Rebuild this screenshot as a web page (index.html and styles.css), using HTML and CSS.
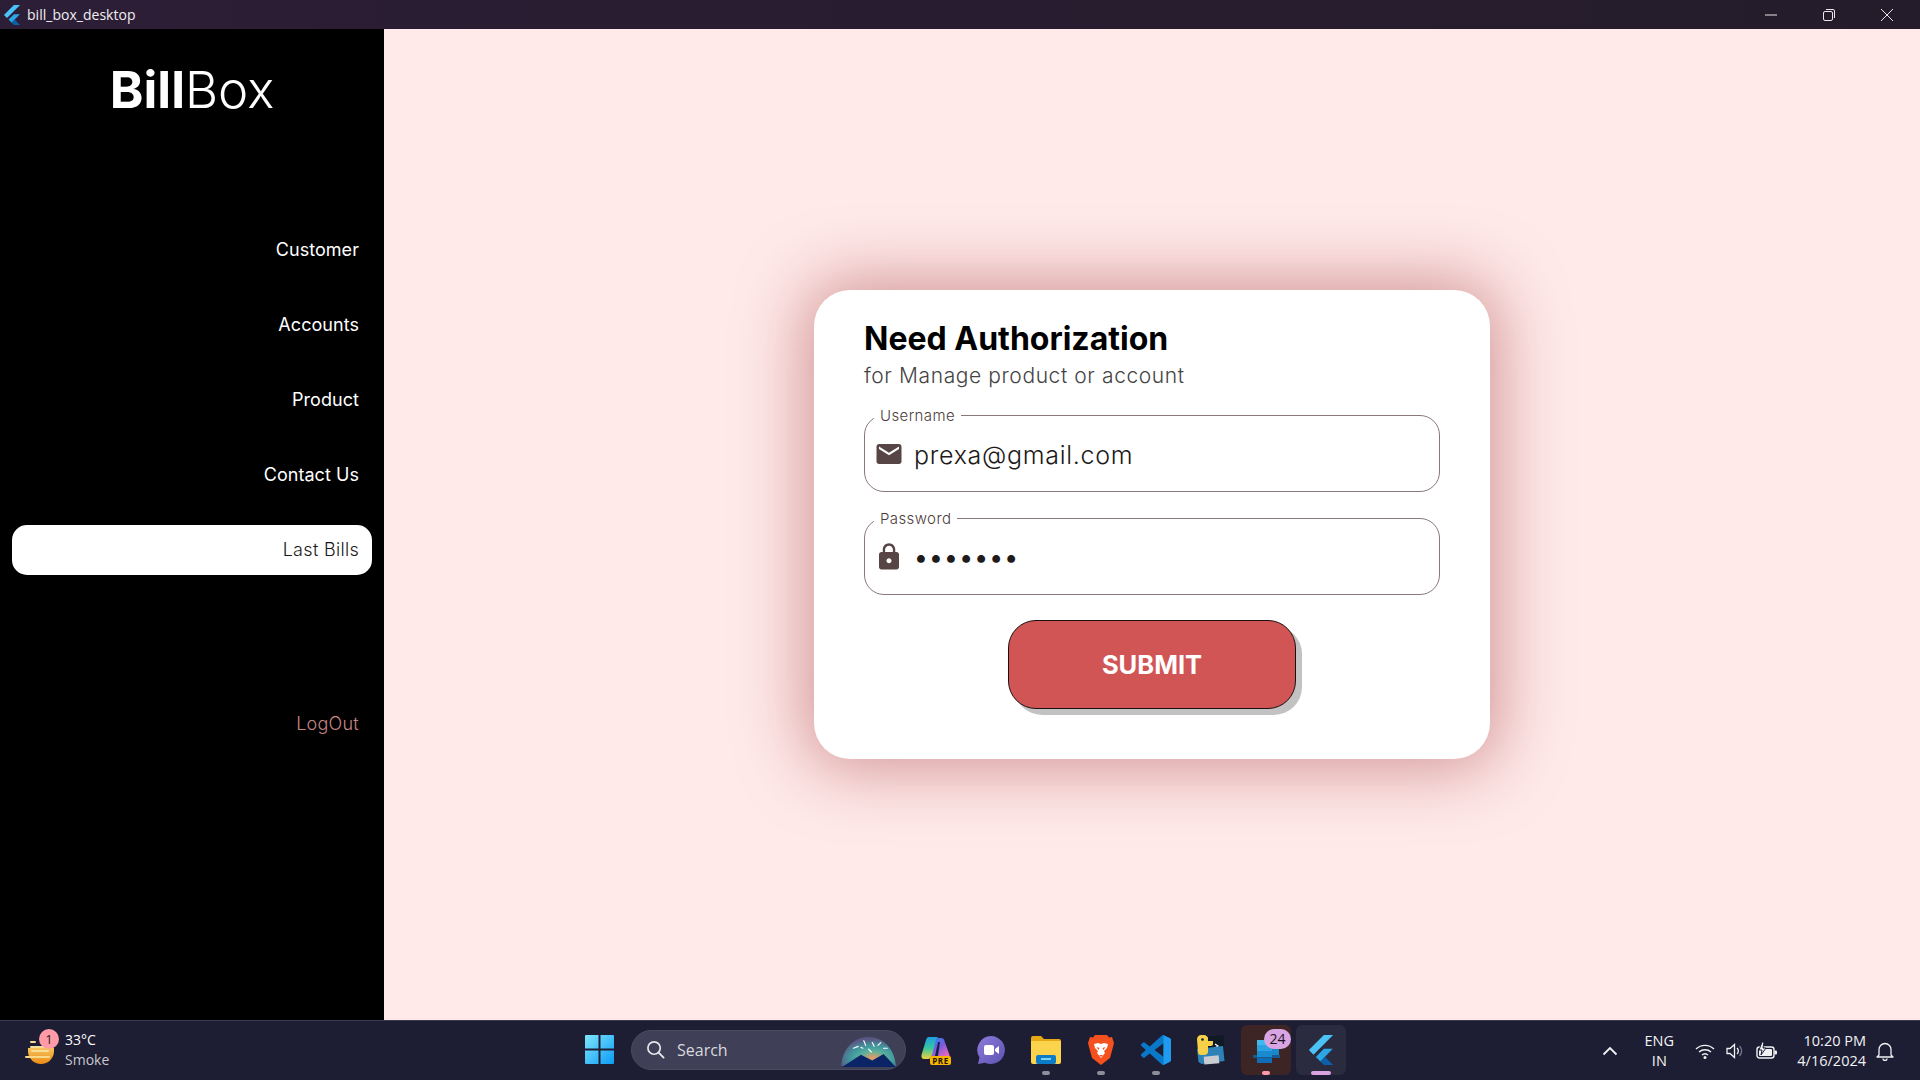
FILE: index.html
```html
<!DOCTYPE html>
<html lang="en">
<head>
<meta charset="utf-8">
<title>bill_box_desktop</title>
<link rel="stylesheet" href="styles.css">
</head>
<body>
<div class="app">
  <header class="titlebar">
    <div class="title-left">
      <svg class="flutter-small" viewBox="0 0 24 24"><path fill="#4cc3f7" d="M14.314 0L2.3 12 6 15.700 21.684 0z"/><path fill="#2ba6e6" d="M14.328 11.072L7.857 17.530l3.700 3.700 9.880-10.158z"/><path fill="#0d5fa8" d="M11.557 21.230L14.327 24H21.700l-6.460-6.468z"/></svg>
      <span class="app-title">bill_box_desktop</span>
    </div>
    <div class="win-controls">
      <svg class="win-btn" viewBox="0 0 14 14"><path d="M1 7h12" stroke="#e8e8ea" fill="none"/></svg>
      <svg class="win-btn" viewBox="0 0 14 14"><rect x="1.500" y="3.500" width="9" height="9" rx="1.500" stroke="#e8e8ea" fill="none"/><path d="M4 1.500h7a1.500 1.500 0 0 1 1.500 1.500v7" stroke="#e8e8ea" fill="none"/></svg>
      <svg class="win-btn" viewBox="0 0 14 14"><path d="M1 1l12 12M13 1L1 13" stroke="#e8e8ea" fill="none"/></svg>
    </div>
  </header>

  <div class="content">
    <aside class="sidebar">
      <div class="logo"><b>Bill</b>Box</div>
      <nav class="nav">
        <a class="nav-item">Customer</a>
        <a class="nav-item">Accounts</a>
        <a class="nav-item">Product</a>
        <a class="nav-item">Contact Us</a>
        <a class="nav-item active">Last Bills</a>
      </nav>
      <a class="nav-item logout">LogOut</a>
    </aside>

    <main class="main">
      <section class="card">
        <h1 class="card-title">Need Authorization</h1>
        <p class="card-sub">for Manage product or account</p>
        <div class="field">
          <span class="field-label">Username</span>
          <svg class="field-icon" viewBox="0 0 24 24"><path d="M20 4H4c-1.100 0-1.990.9-1.990 2L2 18c0 1.100.9 2 2 2h16c1.100 0 2-.9 2-2V6c0-1.100-.9-2-2-2zm0 4l-8 5-8-5V6l8 5 8-5v2z"/></svg>
          <span class="field-value">prexa@gmail.com</span>
        </div>
        <div class="field">
          <span class="field-label">Password</span>
          <svg class="field-icon" viewBox="0 0 24 24"><path d="M18 8h-1V6c0-2.760-2.240-5-5-5S7 3.240 7 6v2H6c-1.100 0-2 .9-2 2v10c0 1.100.9 2 2 2h12c1.100 0 2-.9 2-2V10c0-1.100-.9-2-2-2zm-6 9c-1.100 0-2-.9-2-2s.9-2 2-2 2 .9 2 2-.9 2-2 2zm3.100-9H8.900V6c0-1.710 1.390-3.100 3.100-3.100 1.710 0 3.100 1.390 3.100 3.100v2z"/></svg>
          <span class="field-value dots">•••••••</span>
        </div>
        <button class="submit">SUBMIT</button>
      </section>
    </main>
  </div>

  <footer class="taskbar">
    <div class="tb-left">
      <div class="weather-icon">
        <svg viewBox="0 0 30 30" width="30" height="30">
          <defs><linearGradient id="sun" x1="0" y1="0" x2="0" y2="1"><stop offset="0" stop-color="#f7c35c"/><stop offset="1" stop-color="#ee8a14"/></linearGradient></defs>
          <path d="M3 12h26v3a13 13 0 0 1-26 0z" fill="url(#sun)"/>
          <rect x="5" y="5" width="6" height="2" rx="1" fill="#f5dd9a"/>
          <rect x="5" y="10" width="16" height="2" rx="1" fill="#f5dd9a"/>
          <rect x="6" y="14" width="18" height="2" rx="1" fill="#f5dd9a"/>
          <rect x="0" y="20" width="25" height="2" rx="1" fill="#f7d98a"/>
        </svg>
        <span class="weather-badge">1</span>
      </div>
      <div class="weather-text">
        <span class="w-temp">33°C</span>
        <span class="w-desc">Smoke</span>
      </div>
    </div>

    <div class="tb-center">
      <div class="slot start-slot">
        <svg viewBox="0 0 29 29" width="29" height="29">
          <defs><linearGradient id="win" x1="0" y1="0" x2="1" y2="1"><stop offset="0" stop-color="#7fe6fb"/><stop offset="1" stop-color="#0c9bf5"/></linearGradient></defs>
          <path fill="url(#win)" d="M1 0h12.500v13.500H0V1a1 1 0 0 1 1-1zM15.500 0H28a1 1 0 0 1 1 1v12.500H15.500zM0 15.500h13.500V29H1a1 1 0 0 1-1-1zM15.500 15.500H29V28a1 1 0 0 1-1 1H15.500z"/>
        </svg>
      </div>
      <div class="search">
        <svg class="search-icon" viewBox="0 0 20 20"><circle cx="8.500" cy="8.500" r="6.500" fill="none" stroke="#e6e6ea" stroke-width="1.800"/><path d="M13.300 13.300L18.500 18.500" stroke="#e6e6ea" stroke-width="2" stroke-linecap="round"/></svg>
        <span class="search-text">Search</span>
        <svg class="search-art" viewBox="0 0 60 34" width="57" height="32">
          <defs><radialGradient id="sky" cx=".58" cy=".72" r=".65"><stop offset="0" stop-color="#f39a5e"/><stop offset=".35" stop-color="#5fb09a"/><stop offset=".62" stop-color="#3f9a9f"/><stop offset="1" stop-color="#5a5684"/></radialGradient></defs>
          <path d="M1 32C2 14 14 1 30 1s28 13 29 31z" fill="url(#sky)"/>
          <path d="M2 33l20-13 12 6 12-7 13 14z" fill="#0b2468"/>
          <g stroke="#fff" stroke-width="1.200" stroke-linecap="round"><path d="M14 13l5-2M25 5l2 5M34 7l2 4M43 7l-3 3M50 13l-4 0M30 14l3 3M22 12l2 1"/></g>
        </svg>
      </div>
      <div class="slot">
        <svg viewBox="0 0 30 30" width="30" height="30">
          <defs>
            <linearGradient id="cpl" x1="0" y1="0" x2="0" y2="1"><stop offset="0" stop-color="#1f9fe0"/><stop offset=".5" stop-color="#35c8a0"/><stop offset="1" stop-color="#f0d040"/></linearGradient>
            <linearGradient id="cpr" x1="0" y1="0" x2=".6" y2="1"><stop offset="0" stop-color="#2488e8"/><stop offset=".5" stop-color="#7a5ae0"/><stop offset="1" stop-color="#e86ab8"/></linearGradient>
          </defs>
          <path fill="url(#cpr)" d="M11 3h9c2 0 3 1 3.500 3l5 14c.5 2-.5 4-3 4H11z"/>
          <path fill="#15204a" d="M17 7h2l-2 14h-3z"/>
          <path fill="url(#cpl)" d="M8 2h10c-2 0-3 2-3.500 4L11 20c-.5 2-2 4-4 4H3c-2 0-3-2-2.500-4L5 5c.5-2 1.500-3 3-3z"/>
          <rect x="9" y="21" width="21" height="9" rx="2" fill="#f7b500"/>
          <text class="pre" x="19.500" y="28.500" text-anchor="middle">PRE</text>
        </svg>
      </div>
      <div class="slot">
        <svg viewBox="0 0 30 30" width="30" height="30">
          <defs><linearGradient id="mt" x1="0" y1="0" x2="1" y2="1"><stop offset="0" stop-color="#8c7bdc"/><stop offset="1" stop-color="#5f52b0"/></linearGradient></defs>
          <path fill="url(#mt)" d="M15 1a14 14 0 1 1-6 26.700L2 29l1.500-6.500A14 14 0 0 1 15 1z"/>
          <rect x="8" y="10" width="10" height="10" rx="2" fill="#fff"/>
          <path d="M19 14l4-3v8l-4-3z" fill="#fff"/>
        </svg>
      </div>
      <div class="slot">
        <svg viewBox="0 0 30 28" width="30" height="28">
          <path fill="#e6a817" d="M0 2a2 2 0 0 1 2-2h8l3 3h15a2 2 0 0 1 2 2v5H0z"/>
          <path fill="#fcd34d" d="M0 5h30v21a2 2 0 0 1-2 2H2a2 2 0 0 1-2-2z"/>
          <rect x="5" y="19" width="20" height="9" rx="2" fill="#0c7cc8"/>
          <rect x="10" y="22" width="10" height="2" fill="#7fd0f5"/>
        </svg>
      </div>
      <div class="slot">
        <svg viewBox="0 0 26 30" width="26" height="30">
          <path fill="#f4511e" d="M7 0h12l2 2.500 3-.5 2 6-1 4-3 11-9 7-9-7L1 12 0 8l2-6 3 .5z"/>
          <path fill="#fff" d="M6 9l4-1 3 1 3-1 4 1-1 4-3 3 1 2-4 5-4-5 1-2-3-3z"/>
          <path fill="#f4511e" d="M8.500 12l3 1-1 2zM17.500 12l-3 1 1 2zM11 20h4l-2 2z"/>
        </svg>
      </div>
      <div class="slot">
        <svg viewBox="0 0 24 24" width="30" height="30">
          <path fill="#0a78c8" d="M23.150 2.587L18.210.21a1.494 1.494 0 0 0-1.705.29l-9.460 8.630-4.120-3.128a.999.999 0 0 0-1.276.057L.327 7.261A1 1 0 0 0 .326 8.740L3.899 12 .326 15.260a1 1 0 0 0 .001 1.479L1.650 17.940a.999.999 0 0 0 1.276.057l4.120-3.128 9.460 8.630a1.492 1.492 0 0 0 1.704.29l4.942-2.377A1.500 1.500 0 0 0 24 20.060V3.939a1.500 1.500 0 0 0-.85-1.352zm-5.146 14.861L10.826 12l7.178-5.448v10.896z"/>
          <path fill="#1f9cf0" d="M18 .1l5.150 2.487A1.500 1.500 0 0 1 24 3.939V20.060a1.500 1.500 0 0 1-.85 1.352L18 23.900z"/>
        </svg>
      </div>
      <div class="slot">
        <svg viewBox="0 0 30 30" width="30" height="30">
          <rect x="9" y="1" width="19" height="16" fill="#0f1a26" transform="rotate(-4 18 9)"/>
          <path d="M19 9l3 2-3 2" stroke="#fff" fill="none" stroke-width="1.200"/>
          <path fill="#2f82b8" d="M1 14l26-3 1.500 15-23 3-3-2z"/>
          <rect x="8" y="21" width="15" height="8" fill="#c9ccd0" transform="rotate(-5 15 25)"/>
          <path fill="#f7d04a" d="M1 4c0-2 2-4 4-4h3c2 0 4 2 4 3v3h5v3c0 1-1 2-2 2h-3v6c0 2-2 3-4 3H5c-2 0-3-1-3-3z"/>
          <circle cx="6.500" cy="4.500" r="1.300" fill="#12202e"/>
        </svg>
      </div>
      <div class="slot store">
        <svg viewBox="0 0 30 30" width="30" height="30">
          <rect x="21" y="13" width="7" height="9" fill="#1b86c8"/>
          <rect x="6" y="5" width="15" height="5" fill="#40b8ee"/>
          <rect x="6" y="10" width="15" height="6" fill="#2aa3e0"/>
          <rect x="6" y="16" width="15" height="6" fill="#1a8ad0"/>
          <rect x="6" y="22" width="15" height="6" fill="#0f6cb5"/>
          <path fill="#155a93" d="M2 20h4v2h15v-2h8v2a1 1 0 0 1-1 1H3a1 1 0 0 1-1-1z"/>
        </svg>
        <span class="count-badge">24</span>
        <span class="indicator ind-pink"></span>
      </div>
      <div class="slot flutter-slot">
        <svg viewBox="0 0 24 24" width="30" height="30"><path fill="#4cc3f7" d="M14.314 0L2.300 12 6 15.700 21.684 0z"/><path fill="#2ba6e6" d="M14.328 11.072L7.857 17.530l3.700 3.700 9.880-10.158z"/><path fill="#0d5fa8" d="M11.557 21.230L14.327 24H21.700l-6.460-6.468z"/></svg>
        <span class="indicator ind-lilac"></span>
      </div>
    </div>

    <div class="tb-right">
      <svg class="caret" viewBox="0 0 16 10"><path d="M1.500 8.500L8 2l6.500 6.500" fill="none" stroke="#f2f2f4" stroke-width="1.800"/></svg>
      <div class="lang"><span>ENG</span><span>IN</span></div>
      <svg class="tray" viewBox="0 0 20 20"><g fill="none" stroke="#f2f2f4" stroke-width="1.400"><path d="M1 8a13 13 0 0 1 18 0"/><path d="M4 11a9 9 0 0 1 12 0"/><path d="M7 14a4.500 4.500 0 0 1 6 0"/></g><circle cx="10" cy="16.500" r="1.500" fill="#f2f2f4"/></svg>
      <svg class="tray" viewBox="0 0 20 20"><path d="M2 7.500h3L9.500 3.500v13L5 12.500H2z" fill="none" stroke="#f2f2f4" stroke-width="1.300"/><path d="M12 7a4 4 0 0 1 0 6" fill="none" stroke="#f2f2f4" stroke-width="1.300"/><path d="M14.500 5a7 7 0 0 1 0 10" fill="none" stroke="#77778a" stroke-width="1.300"/></svg>
      <svg class="tray battery" viewBox="0 0 22 20"><rect x="1" y="6" width="17" height="11" rx="2.500" fill="none" stroke="#f2f2f4" stroke-width="1.400"/><rect x="3" y="8" width="13" height="7" rx="1" fill="#f2f2f4"/><rect x="18.500" y="9.500" width="2.500" height="4" rx="1" fill="#f2f2f4"/><path d="M6 1L3 9h3l-1 5 5-7H7l1-6z" fill="#f2f2f4" stroke="#1d1d33"/></svg>
      <div class="clock"><span>10:20 PM</span><span>4/16/2024</span></div>
      <svg class="tray bell" viewBox="0 0 20 20"><path d="M4 14V8.500a6 6 0 0 1 12 0V14l2 2H2z" fill="none" stroke="#f2f2f4" stroke-width="1.300" stroke-linejoin="round"/><path d="M8 17.500a2 2 0 0 0 4 0" fill="none" stroke="#f2f2f4" stroke-width="1.300"/></svg>
    </div>
  </footer>
</div>
</body>
</html>
```

FILE: styles.css
```css
* { box-sizing: border-box; }
html, body { margin: 0; height: 100%; }
body { font-family: Inter, "Liberation Sans", sans-serif; overflow: hidden; }
.app { width: 1920px; height: 1080px; display: flex; flex-direction: column; }

/* title bar */
.titlebar {
  height: 29px; flex: none; display: flex; align-items: center; justify-content: space-between;
  background: linear-gradient(90deg, #2c1e36, #241c2a);
}
.title-left { display: flex; align-items: center; padding-left: 2px; gap: 5px; }
.flutter-small { width: 20px; height: 20px; }
.app-title { font-family: "Open Sans", "Noto Sans", sans-serif; font-size: 14px; color: #f0eef2; line-height: 29px; letter-spacing: .02px; }
.win-controls { display: flex; gap: 44px; padding-right: 26px; align-items: center; }
.win-btn { width: 14px; height: 14px; display: block; }

/* body */
.content { flex: 1; min-height: 0; display: flex; background: #ffe9e9; }
.sidebar { width: 384px; flex: none; background: #000; display: flex; flex-direction: column; padding: 0 12px; }
.logo { height: 62px; margin-top: 30px; text-align: center; font-size: 51px; line-height: 62px; color: #fff; font-weight: 300; }
.logo b { font-weight: 700; }
.nav { margin-top: 104px; display: flex; flex-direction: column; gap: 25px; }
.nav-item { display: block; height: 50px; line-height: 50px; text-align: right; padding-right: 13px; font-size: 18px; letter-spacing: .05px; color: #fff; border-radius: 15px; }
.nav-item.active { background: #fff; color: #1a1a1a; font-weight: 300; letter-spacing: .3px; }
.logout { margin-top: 124px; color: #c88585; font-weight: 300; letter-spacing: .25px; }

.main { flex: 1; display: flex; align-items: center; justify-content: center; }
.card {
  width: 676px; height: 469px; background: #fff; border-radius: 36px; padding: 29px 50px 50px;
  display: flex; flex-direction: column;
  box-shadow: 0 0 65px 10px rgba(190, 110, 110, .66);
}
.card-title { margin: 0; font-size: 32px; line-height: 40px; font-weight: 700; color: #000; }
.card-sub { margin: 3px 0 25px; font-size: 21px; line-height: 28px; font-weight: 300; color: #444; letter-spacing: .6px; }
.field {
  position: relative; height: 77px; flex: none; margin-bottom: 26px;
  border: 1.500px solid #8a7878; border-radius: 20px;
  display: flex; align-items: center; padding: 1px 0 0 9px; gap: 10px;
}
.field:nth-of-type(2) { margin-bottom: 25px; }
.field-label {
  position: absolute; top: -8px; left: 9px; padding: 0 6px; background: #fff;
  font-size: 15px; line-height: 16px; font-weight: 300; color: #4c3c3c; letter-spacing: .4px;
}
.field-icon { width: 30px; height: 30px; fill: #574545; flex: none; margin-top: -1px; }
.field-value { font-size: 25px; line-height: 32px; font-weight: 300; color: #201a1a; letter-spacing: .7px; padding-top: 1px; }
.dots { letter-spacing: 3.200px; font-weight: 700; margin-left: 1px; padding-top: 0; }
.submit {
  align-self: center; width: 288px; height: 89px; flex: none;
  border: 1.500px solid #1a1010; border-radius: 28px; background: #d25555;
  box-shadow: 6px 6px 0 #c2c2c2;
  font-family: Inter, sans-serif; font-size: 25.500px; font-weight: 700; color: #fff;
}

/* task bar */
.taskbar {
  height: 60px; flex: none; display: flex; align-items: center; background: #1d1d33;
  border-top: 1px solid #3b3b4c; position: relative;
}
.tb-left { width: 574px; flex: none; display: flex; align-items: center; padding-left: 25px; gap: 10px; }
.weather-icon { position: relative; width: 30px; height: 30px; }
.weather-badge {
  position: absolute; left: 14px; top: -7px; width: 20px; height: 20px; border-radius: 50%;
  background: #ff9ba8; color: #2a1a20; font: 13px/20px "Open Sans", sans-serif; text-align: center;
}
.weather-text { display: flex; flex-direction: column; font-family: "Open Sans", sans-serif; font-size: 14px; line-height: 20px; margin-top: -1px; }
.w-temp { color: #fff; }
.w-desc { color: #c8c8ce; }
.tb-center { display: flex; align-items: center; gap: 5px; margin-top: -2px; }
.slot { position: relative; width: 50px; height: 50px; display: flex; align-items: center; justify-content: center; border-radius: 6px; }
.slot:nth-child(n+5):nth-child(-n+7)::after {
  content: ""; position: absolute; left: 21px; bottom: 0; width: 8px; height: 4px; border-radius: 2px; background: #8e8e9a;
}
.start-slot { margin-right: 2px; }
.search {
  width: 275px; height: 40px; flex: none; border-radius: 20px; background: #3f3f57; border: 1px solid #4a4a60;
  display: flex; align-items: center; padding-left: 14px; position: relative;
}
.search-icon { width: 19px; height: 19px; flex: none; }
.search-text { margin-left: 12px; font: 16px "Open Sans", sans-serif; color: #d8d8de; }
.search-art { position: absolute; right: 8px; bottom: 1px; }
.pre { font: 700 8px "Open Sans", sans-serif; fill: #1b1200; letter-spacing: .5px; }
.store { background: #3d2526; }
.flutter-slot { background: #2b2b40; }
.count-badge {
  position: absolute; left: 23px; top: 4px; width: 27px; height: 20px; border-radius: 10px;
  background: #d9a4e2; color: #1d1020; font: 14px/20px "Open Sans", sans-serif; text-align: center;
}
.indicator { position: absolute; bottom: 0; height: 4px; border-radius: 2px; }
.ind-pink { left: 21px; width: 8px; background: #ff9ba8; }
.ind-lilac { left: 15px; width: 20px; background: #d9a4e2; }
.tb-right { position: absolute; right: 0; top: 0; bottom: 0; display: flex; align-items: center; padding-right: 25px; font-family: "Open Sans", sans-serif; color: #f2f2f4; font-size: 14.500px; }
.caret { width: 16px; height: 10px; margin-right: 25px; }
.lang { display: flex; flex-direction: column; align-items: center; line-height: 20px; width: 32px; margin-right: 20px; }
.tray { width: 20px; height: 20px; margin-right: 10px; }
.battery { width: 24px; margin: 0 18px 0 0; }
.clock { display: flex; flex-direction: column; align-items: flex-end; line-height: 20px; margin: 0 9px 0 0; }
.bell { margin: 0; }
```
